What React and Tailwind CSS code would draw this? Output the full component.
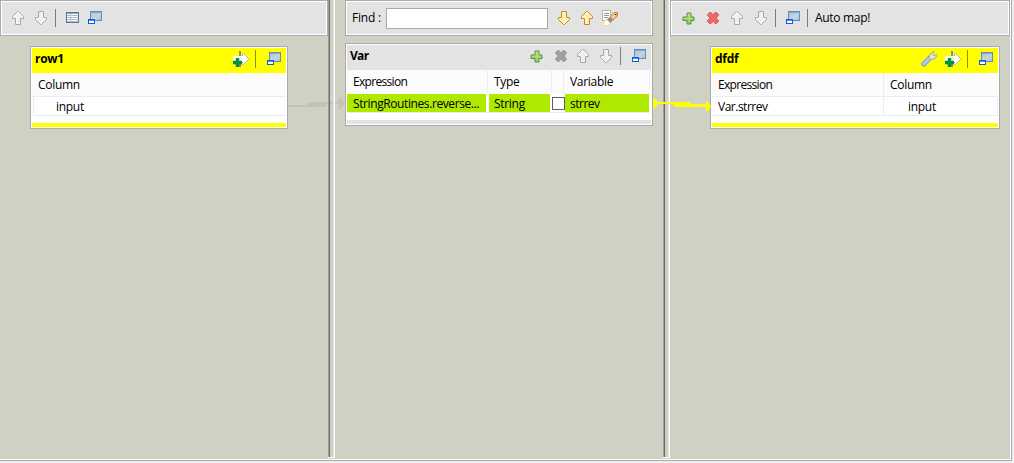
const UpArrow = ({ gold, down, className = "" }) => (
  <svg width="14" height="16" viewBox="0 0 14 16" className={`block shrink-0 ${down ? "rotate-180" : ""} ${className}`}>
    <path
      d="M6.500 1.500H7.500L12.500 6.500V8.500H9.500V14.500H4.500V8.500H1.500V6.500Z"
      fill={gold ? "#fff3bd" : "#f3f3f3"}
      stroke={gold ? "#c58a24" : "#a8a8a8"}
      strokeWidth="1"
    />
    <path d="M8 5V13" stroke={gold ? "#ffe070" : "#e6e6e6"} strokeWidth="1" />
  </svg>
);

const Restore = ({ className = "" }) => (
  <svg width="15" height="14" viewBox="0 0 15 14" className={`block shrink-0 ${className}`}>
    <defs>
      <linearGradient id="win" x1="0" y1="0" x2="1" y2="1">
        <stop offset="0" stopColor="#a9c2df" />
        <stop offset=".6" stopColor="#cdd4d8" />
        <stop offset="1" stopColor="#9fc0e2" />
      </linearGradient>
    </defs>
    <rect x="2.5" y=".5" width="11" height="9" fill="url(#win)" stroke="#5f8dc4" />
    <path d="M3 1.500H13" stroke="#85a8d2" />
    <rect x=".5" y="8.500" width="6" height="4" fill="#fff" stroke="#0b5fce" />
    <path d="M1 9.500H6" stroke="#4d91e4" />
  </svg>
);

const TableIcon = ({ className = "" }) => (
  <svg width="13" height="12" viewBox="0 0 13 12" className={`block shrink-0 ${className}`}>
    <rect x=".5" y=".5" width="12" height="10" fill="#fff" stroke="#62769a" />
    <path d="M1 1.5H12" stroke="#8da0bb" />
    <path d="M1 3.5H12M1 5.5H12M1 7.500H12M1 9.500H12" stroke="#a9b8ca" />
    <path d="M4.5 2V10" stroke="#b9c5d5" />
  </svg>
);

const Plus = ({ className = "" }) => (
  <svg width="13" height="13" viewBox="0 0 13 13" className={`block shrink-0 ${className}`}>
    <defs>
      <linearGradient id="plus" x1="0" y1="0" x2="0" y2="1">
        <stop offset="0" stopColor="#cfe58e" />
        <stop offset="1" stopColor="#7dc35b" />
      </linearGradient>
    </defs>
    <path d="M5 1H9V5H12V8.500H9V12H5V8.500H1V5H5Z" fill="url(#plus)" stroke="#4b9459" />
    <path d="M7 2V11M2 6.500H11" stroke="#bfdc5a" />
  </svg>
);

const Cross = ({ red, className = "" }) => (
  <svg width="14" height="14" viewBox="0 0 14 14" className={`block shrink-0 ${className}`}>
    <path
      d="M1.500 3.500L3.500 1.500H5L7 4L9 1.500H10.500L12.500 3.500V4.500L10 7L12.500 9.500V10.500L10.500 12.500H9L7 10L5 12.500H3.500L1.500 10.500V9.500L4 7L1.500 4.500Z"
      fill={red ? "#ee6968" : "#a0a0a0"}
      stroke={red ? "#d75a5a" : "#a0a0a0"}
    />
  </svg>
);

const AddOutput = ({ className = "" }) => (
  <svg width="17" height="17" viewBox="0 0 17 17" className={`block shrink-0 ${className}`}>
    <path d="M7 0V16" stroke="#8b8b8b" strokeWidth="2" />
    <path d="M0 5H9V2.500H10.500L15.500 7.500V8.500L10.500 13.500H9V11H0Z" fill="#fff" />
    <path d="M9.5 5V2.5H10.5L15.5 7.5V8.5L10.5 13.5H9.5V11" fill="none" stroke="#a5a58a" strokeDasharray="1.5 .6" />
    <path d="M4.500 7V16M0 11.500H9" stroke="#079238" strokeWidth="3.500" />
  </svg>
);

const Wrench = ({ className = "" }) => (
  <svg width="17" height="16" viewBox="0 0 17 16" className={`block shrink-0 ${className}`}>
    <path d="M2.8 13L8.500 7.300" stroke="#7096c6" strokeWidth="5" strokeLinecap="round" />
    <path d="M2.8 13L8.500 7.300" stroke="#b0c8e6" strokeWidth="3.4" strokeLinecap="round" />
    <path d="M8 6.5L9 3L12.5.5L13.5 1L11.5 3.5L13 5L15.5 3.5L16 4.5L14 7.5L10.5 8.5Z" fill="#e9e9dc" stroke="#a2a28c" />
  </svg>
);

const SearchLight = ({ className = "" }) => (
  <svg width="17" height="17" viewBox="0 0 17 17" className={`block shrink-0 ${className}`}>
    <rect x=".5" y=".5" width="8" height="10" fill="#fff" stroke="#c2b48d" />
    <path d="M2 3.5H7M2 5.5H7M2 7.5H6" stroke="#7c98c8" />
    <path d="M0 15.500L4 9L8.500 13L6 15.500Z" fill="#fffbe4" stroke="#dccf9c" strokeWidth=".7" />
    <path d="M5 9L8 7L11 10L8.5 13Z" fill="#8b9096" />
    <path d="M8 7L12 2.500H15.500V6L11 10Z" fill="#f8bd75" stroke="#c58546" />
    <path d="M10.500 5.500L12.500 7.500" stroke="#fff0cf" />
    <path d="M13 4.500H14.500" stroke="#4d3a26" />
  </svg>
);

const Sep = ({ yellow, className = "" }) => (
  <div className={`h-[18px] w-px shrink-0 ${yellow ? "bg-[#8c8c18]" : "bg-[#7d7d7d]"} ${className}`} />
);

const Frame = ({ className = "", children }) => (
  <div className={`border border-[#a9a9b1] bg-white p-px ${className}`}>{children}</div>
);

const Toolbar = ({ className = "", children }) => (
  <Frame className={`h-9 ${className}`}>
    <div className="flex h-full items-center bg-[#e3e3e3]">{children}</div>
  </Frame>
);

const Sash = () => (
  <div className="flex h-[458px] w-[7px] shrink-0 border-b border-white">
    <div className="w-px bg-[#a0a0a0]" />
    <div className="w-px bg-[#696969]" />
    <div className="w-[3px] bg-[#d1d1c3]" />
    <div className="w-px bg-[#e3e3e3]" />
    <div className="w-px bg-white" />
  </div>
);

const T = ({ className = "", children }) => (
  <span className={`block whitespace-nowrap ${className}`}>{children}</span>
);

export default function App() {
  return (
    <div className="relative h-[463px] w-[1014px] overflow-hidden bg-[#f0f0f0] font-['Open_Sans','Noto_Sans',sans-serif] text-[12px] leading-4 tracking-[-0.3px] text-black">
      <div className="h-[461px] w-[1012px] border-r border-b border-[#a9a9b1] bg-white pr-px pb-px">
        <div className="flex h-[459px] w-[1010px] bg-[#d1d1c3]">
          <section className="w-[328px] shrink-0">
            <Toolbar>
              <UpArrow className="ml-[9px]" />
              <UpArrow down className="ml-[9px]" />
              <Sep className="ml-[7px]" />
              <TableIcon className="ml-[10px]" />
              <Restore className="ml-[9px]" />
            </Toolbar>
            <Frame className="mt-[10px] ml-[30px] h-[83px] w-[258px]">
              <div className="flex h-[25px] items-center bg-[#ffff00] pb-[3px]">
                <T className="ml-[3px] w-[198px] font-bold">row1</T>
                <AddOutput />
                <Sep yellow className="ml-[5px]" />
                <Restore className="ml-[11px]" />
              </div>
              <div className="h-6 border-b border-[#e5eefa] bg-[#fbfbfb] pt-1 pl-[6px]">
                <T>Column</T>
              </div>
              <div className="ml-px h-[19px] border-b border-l border-[#ededed] border-l-[#e5eefa] pt-[2px] pl-[22px]">
                <T>input</T>
              </div>
              <div className="mt-[7px] h-1 bg-[#ffff00]" />
            </Frame>
          </section>
          <Sash />
          <section className="w-[328px] shrink-0 pl-[10px]">
            <Toolbar className="w-[308px]">
              <T className="ml-[5px] w-[34px] tracking-[-0.2px]">Find :</T>
              <div className="h-[21px] w-[162px] border border-[#a9a9b1] bg-white" />
              <UpArrow gold down className="ml-[9px]" />
              <UpArrow gold className="ml-[9px]" />
              <SearchLight className="ml-[8px]" />
            </Toolbar>
            <Frame className="mt-[7px] h-[83px] w-[308px]">
              <div className="flex h-[25px] items-center bg-[#e3e3e3] pb-[3px]">
                <T className="ml-[3px] w-[180px] font-bold tracking-[-0.7px]">Var</T>
                <Plus />
                <Cross className="ml-[11px]" />
                <UpArrow className="ml-[8px]" />
                <UpArrow down className="ml-[9px]" />
                <Sep className="ml-[7px]" />
                <Restore className="ml-[11px]" />
              </div>
              <div className="flex h-[24px] w-[304px] bg-[#fbfbfb]">
                <div className="w-[141px] border-r border-[#e5eefa] pt-1 pl-[6px]"><T className="tracking-[-0.68px]">Expression</T></div>
                <div className="w-[64px] border-r border-[#e5eefa] pt-1 pl-[6px]"><T>Type</T></div>
                <div className="w-[12px] border-r border-[#e5eefa]" />
                <div className="w-[86px] border-r border-[#e5eefa] pt-1 pl-[6px]"><T>Variable</T></div>
              </div>
              <div className="flex h-[18px]">
                <div className="w-[139px] bg-[#afe900] pt-[2px] pl-[6px]"><T className="tracking-[-0.4px]">StringRoutines.reverse...</T></div>
                <div className="ml-[3px] w-[61px] bg-[#afe900] pt-[2px] pl-[5px]"><T>String</T></div>
                <div className="mt-[3px] ml-[2px] h-[13px] w-[13px] border border-[#606060] bg-white" />
                <div className="w-[84px] bg-[#afe900] pt-[2px] pl-[5px]"><T className="tracking-[-0.5px]">strrev</T></div>
              </div>
              <div className="h-px w-[303px] bg-[#ededed]" />
              <div className="mt-[7px] h-1 bg-[#e3e3e3]" />
            </Frame>
          </section>
          <Sash />
          <section className="w-[340px] shrink-0">
            <Toolbar>
              <Plus className="ml-[10px]" />
              <Cross red className="ml-[11px]" />
              <UpArrow className="ml-[10px]" />
              <UpArrow down className="ml-[10px]" />
              <Sep className="ml-[7px]" />
              <Restore className="ml-[10px]" />
              <Sep className="ml-[6px]" />
              <T className="ml-[7px]">Auto map!</T>
            </Toolbar>
            <Frame className="mt-[10px] ml-[40px] h-[83px] w-[290px]">
              <div className="flex h-[25px] items-center bg-[#ffff00] pb-[3px]">
                <T className="ml-[3px] w-[206px] font-bold">dfdf</T>
                <Wrench />
                <AddOutput className="ml-[7px]" />
                <Sep yellow className="ml-[5px]" />
                <Restore className="ml-[11px]" />
              </div>
              <div className="flex h-6 border-b border-[#e5eefa] bg-[#fbfbfb]">
                <div className="w-[172px] border-r border-[#e5eefa] pt-1 pl-[6px]"><T className="tracking-[-0.68px]">Expression</T></div>
                <div className="pt-1 pl-[6px]"><T>Column</T></div>
              </div>
              <div className="flex h-[19px] border-r border-b border-[#ededed] border-r-[#e5eefa]">
                <div className="w-[172px] border-r border-[#e5eefa] pt-[2px] pl-[6px]"><T className="tracking-[-0.5px]">Var.strrev</T></div>
                <div className="pt-[2px] pl-[24px]"><T>input</T></div>
              </div>
              <div className="mt-[7px] h-1 bg-[#ffff00]" />
            </Frame>
          </section>
        </div>
      </div>
      <svg className="pointer-events-none absolute top-0 left-0" width="1014" height="463">
        <path d="M288 105h20v-2h2v-1h18v2h-2v3h-38zM330 102h3v2h-3zM335 102h5v2h-5zM339 98h1l5 5v1l-5 5h-1z" fill="#c3c3b5" />
        <path d="M653 98h1l4 4h33v2h15v-3h1l4 5v1l-4 5h-1v-5h-31l-2-3h-15l-4 5h-1z" fill="#ffff00" />
      </svg>
    </div>
  );
}
